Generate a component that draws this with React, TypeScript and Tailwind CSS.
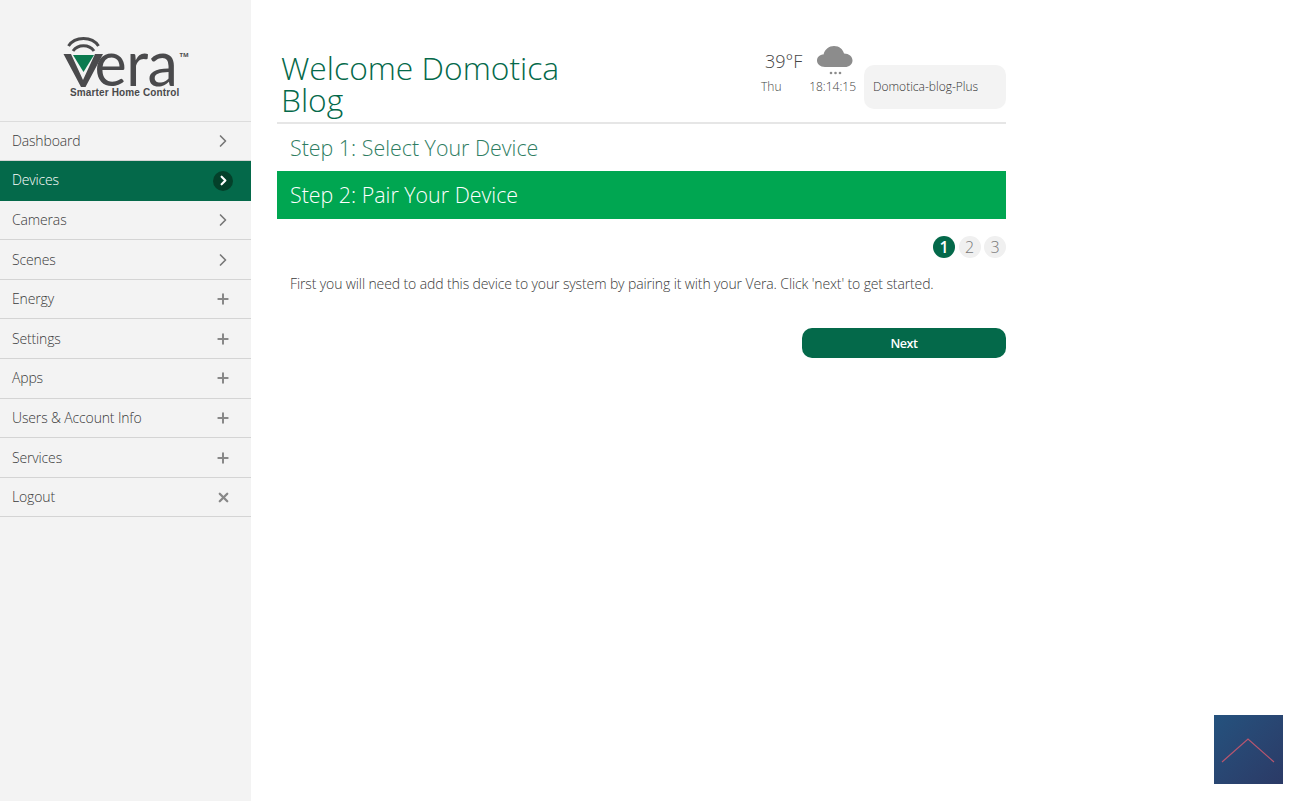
import { ChevronRight, Plus, X } from "lucide-react";

const menu = [
  { label: "Dashboard", icon: "chevron" },
  { label: "Devices", icon: "chevron", active: true },
  { label: "Cameras", icon: "chevron" },
  { label: "Scenes", icon: "chevron" },
  { label: "Energy", icon: "plus" },
  { label: "Settings", icon: "plus" },
  { label: "Apps", icon: "plus" },
  { label: "Users & Account Info", icon: "plus" },
  { label: "Services", icon: "plus" },
  { label: "Logout", icon: "x" },
];

function VeraLogo() {
  return (
    <div className="relative h-[64px] w-[128px] text-[#4a4a4c]">
      <svg className="absolute left-0 top-0" width="52" height="54" viewBox="0 0 52 54" fill="none">
        <path d="M6.500 10 C13 0 30 0 36.500 10" stroke="#4a4a4c" strokeWidth="3" />
        <path d="M11 15 C16 8 27 8 32 15" stroke="#4a4a4c" strokeWidth="3" />
        <path d="M1.500 18 L9 18 L21 44 L33 18 L41 18 L23.500 51 L19 51 Z" fill="#4a4a4c" />
        <path d="M11 19 H32 L21.500 36 Z" fill="#0b7a4f" />
      </svg>
      <span className="absolute left-[33px] top-[8px] text-[61px] leading-[38px] font-normal tracking-[-0.500px] font-['Lato',sans-serif]">era</span>
      <span className="absolute left-[118px] top-[15px] text-[6px] leading-[8px] font-bold">TM</span>
      <span className="absolute left-[8.500px] top-[52px] whitespace-nowrap text-[10px] leading-[10px] font-bold tracking-[0.140px] font-['Liberation_Sans',sans-serif]">Smarter Home Control</span>
    </div>
  );
}

function MenuIcon({ icon, active }: { icon: string; active?: boolean }) {
  if (active) {
    return (
      <span className="flex h-[20px] w-[20px] items-center justify-center rounded-full bg-[#04402a]">
        <ChevronRight size={15} strokeWidth={3.5} className="text-white" />
      </span>
    );
  }
  if (icon === "chevron") return <ChevronRight size={24} strokeWidth={2} className="text-[#777]" />;
  if (icon === "plus") return <Plus size={16} strokeWidth={3} className="text-[#888]" />;
  return <X size={15} strokeWidth={3.6} className="text-[#888]" />;
}

export default function App() {
  return (
    <div className="relative flex h-[801px] w-[1300px] overflow-hidden bg-white font-['Open_Sans',sans-serif] font-light text-[#333]">
      <aside className="h-full w-[251px] shrink-0 bg-[#f3f3f3]">
        <div className="flex h-[121.500px] justify-center border-b border-[#dcdcdc] pt-[36px]">
          <VeraLogo />
        </div>
        {menu.map((item) => (
          <div
            key={item.label}
            className={
              item.active
                ? "flex h-[39.600px] items-center justify-between bg-[#04694a] pl-[12px] pr-[18px] text-[14px] tracking-[-0.150px] text-white"
                : "flex h-[39.600px] items-center justify-between border-b border-[#d4d4d4] pl-[12px] pr-[18px] text-[14px] tracking-[-0.150px] text-[#3a3a3a]"
            }
          >
            <span className={item.active ? "pb-[2px]" : "pb-[1px]"}>{item.label}</span>
            <span className="flex w-[20px] justify-center">
              <MenuIcon icon={item.icon} active={item.active} />
            </span>
          </div>
        ))}
      </aside>

      <main className="ml-[26px] w-[729px] shrink-0">
        <header className="flex h-[124px] border-b-2 border-[#e6e6e6]">
          <h1 className="mt-[52px] w-[300px] pl-[4px] text-[31.800px] leading-[32px] text-[#04694a]">Welcome Domotica Blog</h1>
          <div className="ml-auto flex">
            <div className="mt-[44px] flex w-[104px] flex-col">
              <div className="flex items-start">
                <span className="ml-[5px] mt-[5px] text-[18px] leading-[24px] text-[#444]">39°F</span>
                <svg className="ml-[14px]" width="38" height="32" viewBox="0 0 38 32" fill="#8c8c8c">
                  <path d="M9 23 C4 23 1 20 1 16.500 C1 13 4 10.500 7.500 10.500 C9 5 13 2 18 2 C23.500 2 27 5.500 28 9.500 C33 9.500 36.500 12.500 36.500 16.500 C36.500 20.500 33 23 29 23 Z" />
                  <circle cx="15" cy="29" r="1.300" />
                  <circle cx="19.500" cy="29" r="1.300" />
                  <circle cx="24" cy="29" r="1.300" />
                </svg>
              </div>
              <div className="mt-[3px] flex justify-between pl-[1px] pr-[8px] text-[12px] leading-[16px] text-[#444]">
                <span>Thu</span>
                <span>18:14:15</span>
              </div>
            </div>
            <div className="mt-[65px] flex h-[44px] w-[142px] items-center rounded-[10px] bg-[#f3f3f3] pl-[9px] text-[12px] text-[#333]">
              Domotica-blog-Plus
            </div>
          </div>
        </header>

        <div className="flex h-[47px] items-center pl-[13px] pt-[1px] text-[21.400px] text-[#2e7d62]">Step 1: Select Your Device</div>
        <div className="flex h-[48px] items-center bg-[#00a651] pl-[13px] text-[21.400px] text-white">Step 2: Pair Your Device</div>

        <div className="mt-[17px] flex justify-end gap-[3.500px] text-[16px] leading-[22px]">
          <span className="flex h-[22px] w-[22px] items-center justify-center rounded-full bg-[#04694a] font-semibold text-white">1</span>
          <span className="flex h-[22px] w-[22px] items-center justify-center rounded-full bg-[#f0f0f0] text-[#777]">2</span>
          <span className="flex h-[22px] w-[22px] items-center justify-center rounded-full bg-[#f0f0f0] text-[#777]">3</span>
        </div>

        <p className="mt-[16px] pl-[13px] text-[14px] leading-[20px] tracking-[-0.120px] text-[#3a3a3a]">
          First you will need to add this device to your system by pairing it with your Vera. Click 'next' to get started.
        </p>

        <div className="mt-[34px] flex justify-end">
          <button className="h-[30px] w-[204px] rounded-[10px] bg-[#04694a] pt-[2px] text-[12.500px] font-semibold tracking-[-0.500px] text-white">Next</button>
        </div>
      </main>

      <div className="absolute left-[1214px] top-[715px] h-[69px] w-[69px] bg-gradient-to-br from-[#24527e] to-[#2b3a66]">
        <svg width="69" height="69" viewBox="0 0 69 69" fill="none">
          <path d="M8 47 L34 24 L60 47" stroke="#b8566f" strokeWidth="1.200" />
        </svg>
      </div>
    </div>
  );
}
